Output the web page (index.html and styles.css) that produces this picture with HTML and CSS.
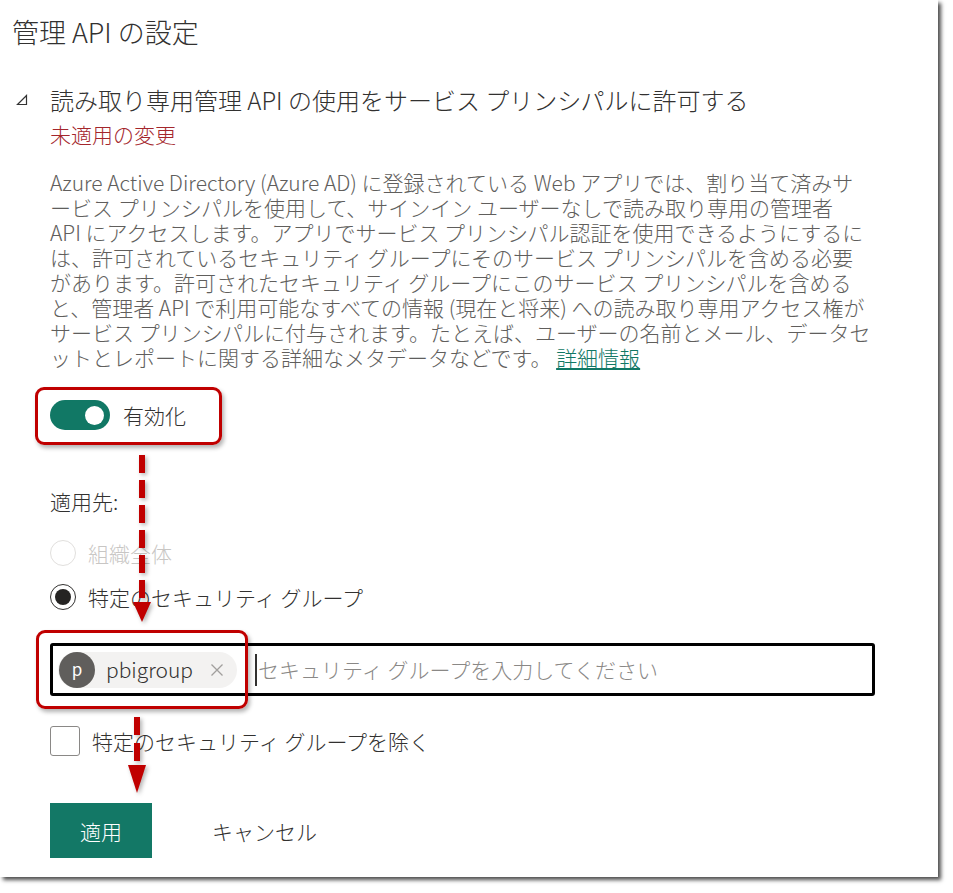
FILE: index.html
```html
<!DOCTYPE html>
<html lang="ja">
<head>
<meta charset="utf-8">
<title>管理 API の設定</title>
<link rel="stylesheet" href="styles.css">
</head>
<body>
<div class="panel">
  <h1 class="title">管理 API の設定</h1>
  <section class="setting">
    <div class="setting-head">
      <svg class="tri" width="12" height="12" viewBox="0 0 12 12"><path d="M10.5 1.5 L10.5 10.5 L1.5 10.5 Z" fill="none" stroke="#333" stroke-width="1.2" stroke-linejoin="miter"/></svg>
      <h2 class="setting-title">読み取り専用管理 API の使用をサービス プリンシパルに許可する</h2>
    </div>
    <div class="setting-body">
      <p class="pending">未適用の変更</p>
      <p class="desc">Azure Active Directory (Azure AD) に登録されている Web アプリでは、割り当て済みサ<br>ービス プリンシパルを使用して、サインイン ユーザーなしで読み取り専用の管理者<br>API にアクセスします。アプリでサービス プリンシパル認証を使用できるようにするに<br>は、許可されているセキュリティ グループにそのサービス プリンシパルを含める必要<br>があります。許可されたセキュリティ グループにこのサービス プリンシパルを含める<br>と、管理者 API で利用可能なすべての情報 (現在と将来) への読み取り専用アクセス権が<br>サービス プリンシパルに付与されます。たとえば、ユーザーの名前とメール、データセ<br>ットとレポートに関する詳細なメタデータなどです。 <a class="more" href="#">詳細情報</a></p>

      <div class="toggle-row">
        <span class="toggle"><span class="knob"></span></span>
        <span class="toggle-label">有効化</span>
      </div>

      <p class="apply-to">適用先:</p>

      <div class="radio-group">
        <div class="radio is-disabled"><span class="radio-circle"></span><span class="radio-label">組織全体</span></div>
        <div class="radio is-checked"><span class="radio-circle"><span class="radio-dot"></span></span><span class="radio-label">特定のセキュリティ グループ</span></div>
      </div>

      <div class="picker">
        <span class="chip">
          <span class="avatar">p</span>
          <span class="chip-text">pbigroup</span>
          <svg class="chip-x" width="14" height="14" viewBox="0 0 14 14"><path d="M1.5 1.5 L12.5 12.5 M12.5 1.5 L1.5 12.5" stroke="#a19f9d" stroke-width="1.3" fill="none"/></svg>
        </span>
        <span class="cursor"></span>
        <span class="placeholder">セキュリティ グループを入力してください</span>
      </div>

      <div class="check-row">
        <span class="checkbox"></span>
        <span class="check-label">特定のセキュリティ グループを除く</span>
      </div>

      <div class="actions">
        <button class="btn-primary" type="button">適用</button>
        <button class="btn-cancel" type="button">キャンセル</button>
      </div>
    </div>
  </section>

  <div class="annot annot-toggle"></div>
  <div class="annot annot-chip"></div>
  <svg class="arrows" width="938" height="877" viewBox="0 0 938 877">
    <line x1="142" y1="455" x2="142" y2="603" stroke="#c00000" stroke-width="6" stroke-dasharray="18 7"/>
    <path d="M133 602 L151 602 L142 622 Z" fill="#c00000"/>
    <line x1="137" y1="717" x2="137" y2="766" stroke="#c00000" stroke-width="6" stroke-dasharray="18 8"/>
    <path d="M128 765 L146 765 L137 793 Z" fill="#c00000"/>
  </svg>
</div>
</body>
</html>
```

FILE: styles.css
```css
html, body {
  margin: 0;
  padding: 0;
  background: #ffffff;
}

body {
  font-family: "Noto Sans CJK JP", "Noto Sans", sans-serif;
  font-weight: 300;
  color: #323130;
  min-height: 893px;
}

.panel {
  position: relative;
  width: 938px;
  height: 877px;
  background: #ffffff;
  box-shadow: 3px 3px 4px rgba(0, 0, 0, 0.7);
}

.title {
  margin: 0;
  padding: 17px 0 0 12px;
  font-size: 27px;
  line-height: 30px;
  font-weight: 300;
  color: #323130;
}

.setting {
  margin-top: 38px;
}

.setting-head {
  display: flex;
  align-items: center;
  gap: 22px;
  padding-left: 16px;
  height: 30px;
}

.tri {
  display: block;
  flex: none;
}

.setting-title {
  margin: 0;
  font-size: 24px;
  line-height: 30px;
  font-weight: 300;
  color: #323130;
}

.setting-body {
  padding-left: 50px;
  font-size: 21px;
  line-height: 25px;
}

.pending {
  margin: 7px 0 0;
  color: #a4262c;
}

.desc {
  margin: 23px 0 0;
  color: #605e5c;
  white-space: nowrap;
}

.more {
  color: #117865;
  text-decoration: underline;
}

.toggle-row {
  display: flex;
  align-items: center;
  gap: 13px;
  margin-top: 30px;
  height: 30px;
}

.toggle {
  display: flex;
  align-items: center;
  justify-content: flex-end;
  width: 60px;
  height: 30px;
  padding-right: 6px;
  box-sizing: border-box;
  border-radius: 15px;
  background: #117865;
}

.knob {
  width: 19px;
  height: 19px;
  border-radius: 50%;
  background: #ffffff;
}

.toggle-label {
  color: #323130;
}

.apply-to {
  margin: 59px 0 0;
  color: #323130;
}

.radio-group {
  display: flex;
  flex-direction: column;
  gap: 18px;
  margin-top: 26px;
}

.radio {
  display: flex;
  align-items: center;
  gap: 12px;
  height: 26px;
}

.radio-circle {
  display: flex;
  align-items: center;
  justify-content: center;
  width: 26px;
  height: 26px;
  box-sizing: border-box;
  border-radius: 50%;
  border: 1px solid #323130;
}

.radio-dot {
  width: 16px;
  height: 16px;
  border-radius: 50%;
  background: #252423;
}

.is-disabled .radio-circle {
  border-color: #e1dfdd;
}

.is-disabled .radio-label {
  color: #c8c6c4;
}

.picker {
  display: flex;
  align-items: center;
  margin-top: 33px;
  width: 825px;
  height: 53px;
  box-sizing: border-box;
  border: 3px solid #000000;
  border-radius: 3px;
  padding-left: 5px;
}

.chip {
  display: flex;
  align-items: center;
  height: 36px;
  padding-right: 13px;
  border-radius: 18px;
  background: #f3f2f1;
}

.avatar {
  display: flex;
  align-items: center;
  justify-content: center;
  width: 36px;
  height: 36px;
  margin-left: 1px;
  border-radius: 50%;
  background: #605e5c;
  color: #ffffff;
  font-size: 17px;
  font-weight: 400;
  line-height: 1;
  padding-bottom: 3px;
  box-sizing: border-box;
}

.chip-text {
  margin-left: 11px;
  color: #323130;
  font-size: 21px;
}

.chip-x {
  display: block;
  margin-left: 17px;
}

.cursor {
  width: 2px;
  height: 32px;
  margin-left: 18px;
  background: #323130;
}

.placeholder {
  margin-left: 1px;
  color: #8a8886;
}

.check-row {
  display: flex;
  align-items: center;
  gap: 12px;
  margin-top: 30px;
  height: 30px;
}

.checkbox {
  width: 30px;
  height: 30px;
  box-sizing: border-box;
  border: 1px solid #8a8886;
  border-radius: 3px;
}

.check-label {
  color: #323130;
}

.actions {
  display: flex;
  align-items: center;
  margin-top: 47px;
}

.btn-primary {
  width: 102px;
  height: 55px;
  border: none;
  border-radius: 0;
  background: #137866;
  color: #ffffff;
  font-family: inherit;
  font-weight: 300;
  font-size: 21px;
  padding: 0;
}

.btn-cancel {
  margin-left: 60px;
  border: none;
  background: none;
  padding: 0;
  color: #323130;
  font-family: inherit;
  font-weight: 300;
  font-size: 21px;
}

.annot {
  position: absolute;
  box-sizing: border-box;
  border: 3px solid #c00000;
  border-radius: 9px;
  box-shadow: 2px 3px 4px rgba(0, 0, 0, 0.3);
}

.annot-toggle {
  left: 35px;
  top: 387px;
  width: 187px;
  height: 58px;
}

.annot-chip {
  left: 36px;
  top: 630px;
  width: 212px;
  height: 79px;
}

.arrows {
  position: absolute;
  left: 0;
  top: 0;
  pointer-events: none;
  filter: drop-shadow(2px 2px 2px rgba(0, 0, 0, 0.3));
}
```
